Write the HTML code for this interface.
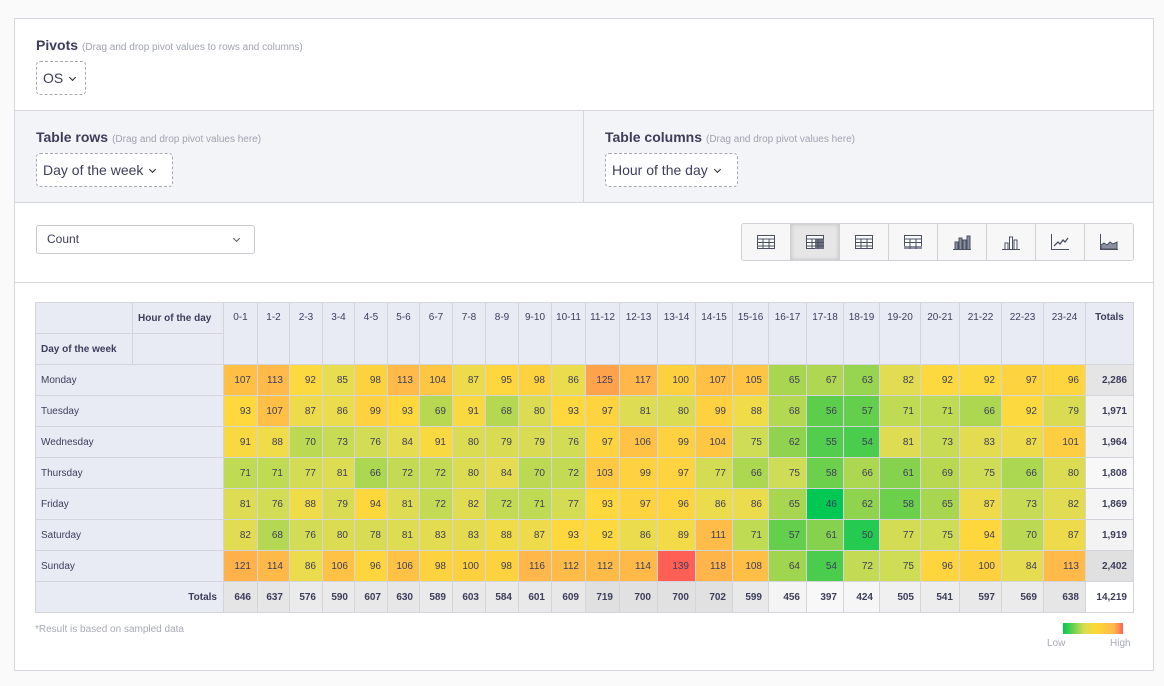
<!DOCTYPE html>
<html><head><meta charset="utf-8">
<style>
*{box-sizing:border-box;margin:0;padding:0}
body{width:1164px;height:686px;background:#fafafa;font-family:"Liberation Sans",sans-serif;color:#3d3d5c;position:relative;overflow:hidden}
.panel{position:absolute;left:14px;top:18px;width:1140px;height:653px;background:#fff;border:1px solid #d5d7dd}
.sec{position:absolute;left:0;width:1138px;border-bottom:1px solid #d5d7dd}
h3{font-size:14px;font-weight:bold;color:#3d3d5c;display:inline-block}
.hint{font-size:10px;color:#a0a3b0;margin-left:4px}
.dd{position:absolute;border:1px dashed #a8a8b0;border-radius:4px;font-size:14px;color:#3d3d5c;padding:0 6px;height:34px;line-height:32px;background:#fff}
.chev{display:inline-block;width:5px;height:5px;border-right:1.5px solid #222;border-bottom:1.5px solid #222;transform:rotate(45deg);margin-left:7px;position:relative;top:-3px}
.tb{position:absolute;left:726px;top:204px;display:flex;border:1px solid #cfd1d6;border-radius:3px;overflow:hidden}
.tb div{width:49px;height:36px;border-left:1px solid #cfd1d6;background:#f7f7f7;display:flex;align-items:center;justify-content:center}
.tb div:first-child{border-left:none;width:48px}
.tb div.act{background:#e6e6e6;box-shadow:inset 0 0 4px #bbb}
table{position:absolute;left:20px;top:283px;border-collapse:collapse;font-size:10px;table-layout:fixed}
td{border:1px solid #d3d5db;height:31px;text-align:right;padding-right:6px;color:#3d3d5c;white-space:nowrap}
.hd{background:#e8ebf3}
.hb{font-weight:bold;text-align:left;padding-left:5px}
.hh{text-align:center;padding:0;vertical-align:top;padding-top:9px}
.rl{background:#e8ebf3;text-align:left;padding-left:5px}
.tot{font-weight:bold}
</style></head><body>
<div class="panel">
 <div class="sec" style="top:0;height:92px;background:#fff">
  <div style="position:absolute;left:21px;top:18px"><h3>Pivots</h3><span class="hint">(Drag and drop pivot values to rows and columns)</span></div>
  <div class="dd" style="left:21px;top:42px;width:50px">OS<span class="chev"></span></div>
 </div>
 <div class="sec" style="top:92px;height:92px;background:#f2f4f8">
  <div style="position:absolute;left:568px;top:0;width:1px;height:91px;background:#d5d7dd"></div>
  <div style="position:absolute;left:21px;top:18px"><h3>Table rows</h3><span class="hint">(Drag and drop pivot values here)</span></div>
  <div class="dd" style="left:21px;top:42px;width:137px">Day of the week<span class="chev"></span></div>
  <div style="position:absolute;left:590px;top:18px"><h3>Table columns</h3><span class="hint">(Drag and drop pivot values here)</span></div>
  <div class="dd" style="left:590px;top:42px;width:133px">Hour of the day<span class="chev"></span></div>
 </div>
 <div class="sec" style="top:184px;height:80px;background:#fff">
  <div style="position:absolute;left:21px;top:22px;width:219px;height:29px;border:1px solid #c8cad0;border-radius:3px;font-size:12px;line-height:27px;padding-left:10px">Count<span class="chev" style="position:absolute;right:15px;top:10px;border-color:#555"></span></div>
 </div>
 <div class="tb">
  <div><svg width="18" height="14"><rect x="0.5" y="0.5" width="17" height="13" fill="#fff" stroke="#4a5060"/><path d="M0 4H18M0 7.5H18M0 11H18M6 4V14M12 4V14" stroke="#4a5060"/></svg></div>
  <div class="act"><svg width="18" height="14"><rect x="0.5" y="0.5" width="17" height="13" fill="#fff" stroke="#4a5060"/><rect x="9" y="4" width="9" height="10" fill="#6a7080"/><path d="M0 4H18M0 7.5H18M0 11H18M6 4V14M12 4V14" stroke="#4a5060"/></svg></div>
  <div><svg width="18" height="14"><rect x="0.5" y="0.5" width="17" height="13" fill="#fff" stroke="#4a5060"/><path d="M0 4H18M0 7.5H18M0 11H18M6 4V14M12 4V14" stroke="#4a5060"/></svg></div>
  <div><svg width="18" height="14"><rect x="0.5" y="0.5" width="17" height="13" fill="#fff" stroke="#4a5060"/><rect x="0" y="11" width="18" height="3" fill="#8a90a0"/><path d="M0 4H18M0 7.5H18M6 4V14M12 4V14" stroke="#4a5060"/></svg></div>
  <div><svg width="18" height="16"><path d="M2 15V8h3v7M6 15V4h3v11M10 15V6h3v9M14 15V2h3v13" fill="#8a90a0" stroke="#4a5060"/><path d="M0 15.5H18" stroke="#4a5060"/></svg></div>
  <div><svg width="18" height="16"><path d="M3 15V9h3v6M7.5 15V3h3v12M12 15V6h3v9" fill="#fff" stroke="#4a5060"/><path d="M0 15.5H18" stroke="#4a5060"/></svg></div>
  <div><svg width="18" height="16"><path d="M0.5 0V15.5H18" fill="none" stroke="#4a5060"/><path d="M3 12L7 8L9 10L12 6L14 8L17 4" fill="none" stroke="#4a5060" stroke-width="1.3"/></svg></div>
  <div><svg width="18" height="16"><path d="M0.5 0V15.5H18" fill="none" stroke="#4a5060"/><path d="M1 15V11L4 9L7 11L10 8L13 10L17 8V15Z" fill="#8a90a0" stroke="#4a5060"/></svg></div>
 </div>
 <table id="t"></table>
 <div style="position:absolute;left:20px;top:605px;font-size:10px;color:#a8aab5">*Result is based on sampled data</div>
 <div style="position:absolute;left:1048px;top:604px;width:60px;height:11px;background:linear-gradient(90deg,#00c853,#d8dc50 35%,#fdd835 55%,#ffb84a 85%,#ff5f55)"></div>
 <div style="position:absolute;left:1032px;top:619px;font-size:10px;color:#a8aab5">Low</div>
 <div style="position:absolute;left:1095px;top:619px;font-size:10px;color:#a8aab5">High</div>
</div>
<script>
var hrs=[];for(var i=0;i<24;i++)hrs.push(i+"-"+(i+1));
var W=[34,32,33,32,33,32,33,33,33,33,34,34,38,38,37,36,38,37,36,41,39,42,42,42];
var days=["Monday","Tuesday","Wednesday","Thursday","Friday","Saturday","Sunday"];
var D=[[107,113,92,85,98,113,104,87,95,98,86,125,117,100,107,105,65,67,63,82,92,92,97,96],
[93,107,87,86,99,93,69,91,68,80,93,97,81,80,99,88,68,56,57,71,71,66,92,79],
[91,88,70,73,76,84,91,80,79,79,76,97,106,99,104,75,62,55,54,81,73,83,87,101],
[71,71,77,81,66,72,72,80,84,70,72,103,99,97,77,66,75,58,66,61,69,75,66,80],
[81,76,88,79,94,81,72,82,72,71,77,93,97,96,86,86,65,46,62,58,65,87,73,82],
[82,68,76,80,78,81,83,83,88,87,93,92,86,89,111,71,57,61,50,77,75,94,70,87],
[121,114,86,106,96,106,98,100,98,116,112,112,114,139,118,108,64,54,72,75,96,100,84,113]];
var RT=["2,286","1,971","1,964","1,808","1,869","1,919","2,402"];
var CT=[646,637,576,590,607,630,589,603,584,601,609,719,700,700,702,599,456,397,424,505,541,597,569,638];
var S=[[46,[0,200,83]],[56,[92,206,76]],[65,[168,214,80]],[75,[207,220,85]],[85,[232,220,80]],[93,[254,216,61]],[100,[253,208,64]],[107,[255,192,69]],[115,[255,184,74]],[122,[255,176,74]],[139,[255,95,85]]];
function col(v){for(var i=1;i<S.length;i++){if(v<=S[i][0]){var a=S[i-1],b=S[i],t=(v-a[0])/(b[0]-a[0]);return "rgb("+[0,1,2].map(function(k){return Math.round(a[1][k]+(b[1][k]-a[1][k])*t)}).join(",")+")";}}return "rgb(255,95,85)";}
function g(v,lo,hi){var t=(v-lo)/(hi-lo);var c=Math.round(248-t*24);return "rgb("+c+","+c+","+c+")";}
var h='<colgroup><col style="width:97px"><col style="width:91px">';W.forEach(function(w){h+='<col style="width:'+w+'px">'});h+='<col style="width:48px"></colgroup>';
h+='<tr><td class="hd"></td><td class="hd hb" style="font-weight:bold">Hour of the day</td>';
hrs.forEach(function(x){h+='<td class="hd hh" rowspan="2">'+x+'</td>'});
h+='<td class="hd hh tot" rowspan="2">Totals</td></tr><tr><td class="hd hb">Day of the week</td><td class="hd"></td></tr>';
D.forEach(function(r,i){h+='<tr><td class="rl" colspan="2">'+days[i]+'</td>';r.forEach(function(v){h+='<td style="background:'+col(v)+'">'+v+'</td>'});
var n=parseInt(RT[i].replace(",",""));h+='<td class="tot" style="background:'+g(n,1800,2400)+'">'+RT[i]+'</td></tr>'});
h+='<tr><td class="rl tot" colspan="2" style="text-align:right;padding-right:6px">Totals</td>';
CT.forEach(function(v){h+='<td class="tot" style="background:'+g(v,397,719)+'">'+v+'</td>'});
h+='<td class="tot" style="background:#fff">14,219</td></tr>';
document.getElementById("t").innerHTML=h;
</script>
</body></html>
